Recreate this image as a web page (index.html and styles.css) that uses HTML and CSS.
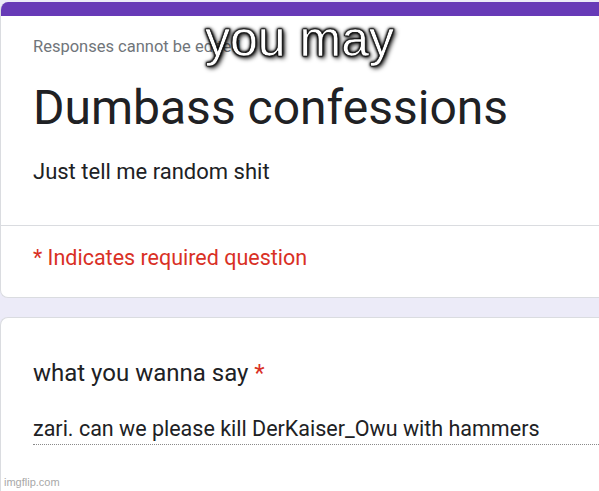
FILE: index.html
```html
<!DOCTYPE html>
<html lang="en">
  <head>
    <meta charset="UTF-8" />
    <title>Dumbass confessions</title>
    <link rel="stylesheet" href="styles.css">
  </head>
  <body>
    <div class="page">
      <!-- header card -->
      <div class="kort hovedkort">
        <div class="topbar"></div>
        <div class="kortindhold">
          <p class="lukket">Responses cannot be edited</p>
          <h1 class="titel">Dumbass confessions</h1>
          <p class="beskrivelse">Just tell me random shit</p>
        </div>
        <div class="krav">* Indicates required question</div>
      </div>

      <!-- spørgsmål -->
      <div class="kort spoergsmaal">
        <h2 class="sporg">what you wanna say <span class="stjerne">*</span></h2>
        <p class="svar">zari. can we please kill DerKaiser_Owu with hammers</p>
      </div>
    </div>

    <div class="meme">you may</div>
    <div class="vandmaerke">imgflip.com</div>
  </body>
</html>
```

FILE: styles.css
```css
* {
  margin: 0;
  padding: 0;
  box-sizing: border-box;
}

body {
  width: 599px;
  height: 491px;
  overflow: hidden;
  background-color: #ffffff;
  font-family: "Roboto", sans-serif;
  position: relative;
}

.page {
  padding-top: 2px;
  background-color: #ecebf8;
  height: 491px;
  display: flex;
  flex-direction: column;
}

/* ---------KORT------------*/

.kort {
  background-color: #ffffff;
  border: 1px solid #dadce0;
  border-right: none;
  border-radius: 8px 0 0 8px;
}

.hovedkort {
  border-top: none;
  overflow: hidden;
  height: 296px;
  flex-shrink: 0;
}

.topbar {
  height: 14px;
  background-color: #673ab7;
}

.kortindhold {
  padding: 21px 32px 0;
  height: 210px;
  border-bottom: 1px solid #dadce0;
}

.lukket {
  font-size: 16.5px;
  line-height: 20px;
  color: #70757a;
}

.titel {
  font-weight: 400;
  font-size: 48px;
  line-height: 56px;
  color: #202124;
  margin-top: 23px;
}

.beskrivelse {
  font-size: 22px;
  line-height: 26px;
  color: #202124;
  margin-top: 23px;
}

.krav {
  padding: 19px 32px 0;
  font-size: 21.5px;
  line-height: 26px;
  color: #d93025;
}

.spoergsmaal {
  margin-top: 19px;
  flex: 1;
  border-bottom: none;
  border-radius: 8px 0 0 0;
  padding: 41px 0 0 32px;
}

.sporg {
  font-weight: 400;
  font-size: 24px;
  line-height: 28px;
  color: #202124;
}

.stjerne {
  color: #d93025;
}

.svar {
  margin-top: 29px;
  font-size: 21.5px;
  line-height: 26px;
  color: #202124;
  padding-bottom: 2px;
  border-bottom: 1px dotted #8a8a8a;
}

/* ---------MEME TEKST------------*/

.meme {
  position: absolute;
  top: 10px;
  left: 0;
  width: 599px;
  text-align: center;
  font-family: "Liberation Sans", sans-serif;
  font-size: 50px;
  color: #ffffff;
  -webkit-text-stroke: 0.6px #000;
  text-shadow: 0 0 2px #000, 0 0 2px #000, 0 0 3px #000, 0 0 4px #000, 2px 2px 5px #000;
}

.vandmaerke {
  position: absolute;
  left: 4px;
  bottom: 3px;
  font-family: "Liberation Sans", sans-serif;
  font-size: 11px;
  color: #a8a8a8;
}
```
